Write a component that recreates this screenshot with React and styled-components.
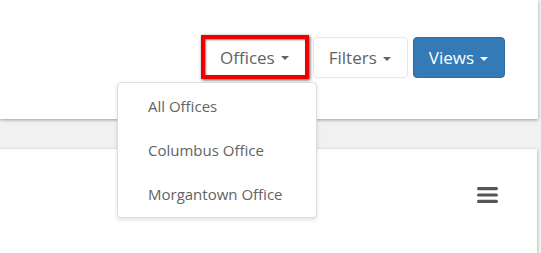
import React from "react";
import styled, { createGlobalStyle } from "styled-components";

const colors = {
  page: "#f1f1f1",
  white: "#ffffff",
  text: "#636363",
  blue: "#337ab7",
  red: "#ee0000",
  line: "#dddddd",
};

const GlobalStyle = createGlobalStyle`
html, body {
    margin: 0;
    padding: 0;
    background: ${colors.page};
    font-family: "Open Sans", "Liberation Sans", sans-serif;
    overflow: hidden;
}
`;

const Page = styled.div`
display: flex;
flex-direction: column;
height: 253px;
`;

const TopCard = styled.section`
position: relative;
z-index: 2;
width: 538px;
height: 119px;
background: ${colors.white};
box-shadow: 0 1px 3px rgba(0, 0, 0, 0.35);
display: flex;
justify-content: flex-end;
align-items: flex-start;
box-sizing: border-box;
padding: 37px 33px 0 0;
gap: 4px;
`;

const Highlight = styled.div`
position: relative;
margin-top: -2px;
`;

const Button = styled.button`
display: flex;
align-items: center;
box-sizing: border-box;
height: ${(p) => (p.$marked ? "44px" : "41px")};
padding: 0 16px 0 ${(p) => (p.$marked ? "15px" : "15px")};
font-family: "Open Sans", "Liberation Sans", sans-serif;
font-size: 17px;
color: ${(p) => (p.$primary ? colors.white : colors.text)};
background: ${(p) => (p.$primary ? colors.blue : colors.white)};
border: ${(p) =>
    p.$marked ? `4px solid ${colors.red}` : p.$primary ? `1px solid #2e6da4` : `1px solid #e6e6e6`};
border-radius: ${(p) => (p.$marked ? "0" : "4px")};
box-shadow: ${(p) =>
    p.$marked ? "1px 1px 3px rgba(0,0,0,0.7), inset 1px 1px 2px rgba(0,0,0,0.5)" : "none"};
margin-left: ${(p) => (p.$primary ? "1px" : "0")};
cursor: pointer;
`;

const Caret = styled.span`
display: inline-block;
margin-left: 6px;
margin-top: 2px;
width: 0;
height: 0;
border-left: 4.5px solid transparent;
border-right: 4.5px solid transparent;
border-top: 4.5px solid currentColor;
`;

const Menu = styled.ul`
position: absolute;
top: 47px;
left: -84px;
z-index: 5;
width: 200px;
margin: 0;
padding: 1px 0;
list-style: none;
background: ${colors.white};
border: 1px solid ${colors.line};
border-radius: 4px;
box-sizing: border-box;
box-shadow: 0 2px 4px rgba(0, 0, 0, 0.12);
`;

const MenuItem = styled.li`
height: 44px;
display: flex;
align-items: center;
padding-left: 30px;
font-size: 15px;
color: ${colors.text};
`;

const Card = styled.section`
position: relative;
z-index: 1;
margin-top: 30px;
width: 537px;
flex: 1;
background: ${colors.white};
box-shadow: 0 1px 3px rgba(0, 0, 0, 0.35);
display: flex;
justify-content: flex-end;
align-items: flex-start;
box-sizing: border-box;
padding: 38px 39px 0 0;
`;

const Bars = () => (
  <svg width="21" height="16" viewBox="0 0 21 16" fill="#555">
    <rect x="0" y="0" width="21" height="3.2" rx="1.6" />
    <rect x="0" y="6.4" width="21" height="3.2" rx="1.6" />
    <rect x="0" y="12.8" width="21" height="3.2" rx="1.6" />
  </svg>
);

const offices = ["All Offices", "Columbus Office", "Morgantown Office"];

const App = () => (
  <Page>
    <GlobalStyle />
    <TopCard>
      <Highlight>
        <Button $marked>
          Offices<Caret />
        </Button>
        <Menu>
          {offices.map((o) => (
            <MenuItem key={o}>{o}</MenuItem>
          ))}
        </Menu>
      </Highlight>
      <Button>
        Filters<Caret />
      </Button>
      <Button $primary>
        Views<Caret />
      </Button>
    </TopCard>
    <Card>
      <Bars />
    </Card>
  </Page>
);

export default App;
